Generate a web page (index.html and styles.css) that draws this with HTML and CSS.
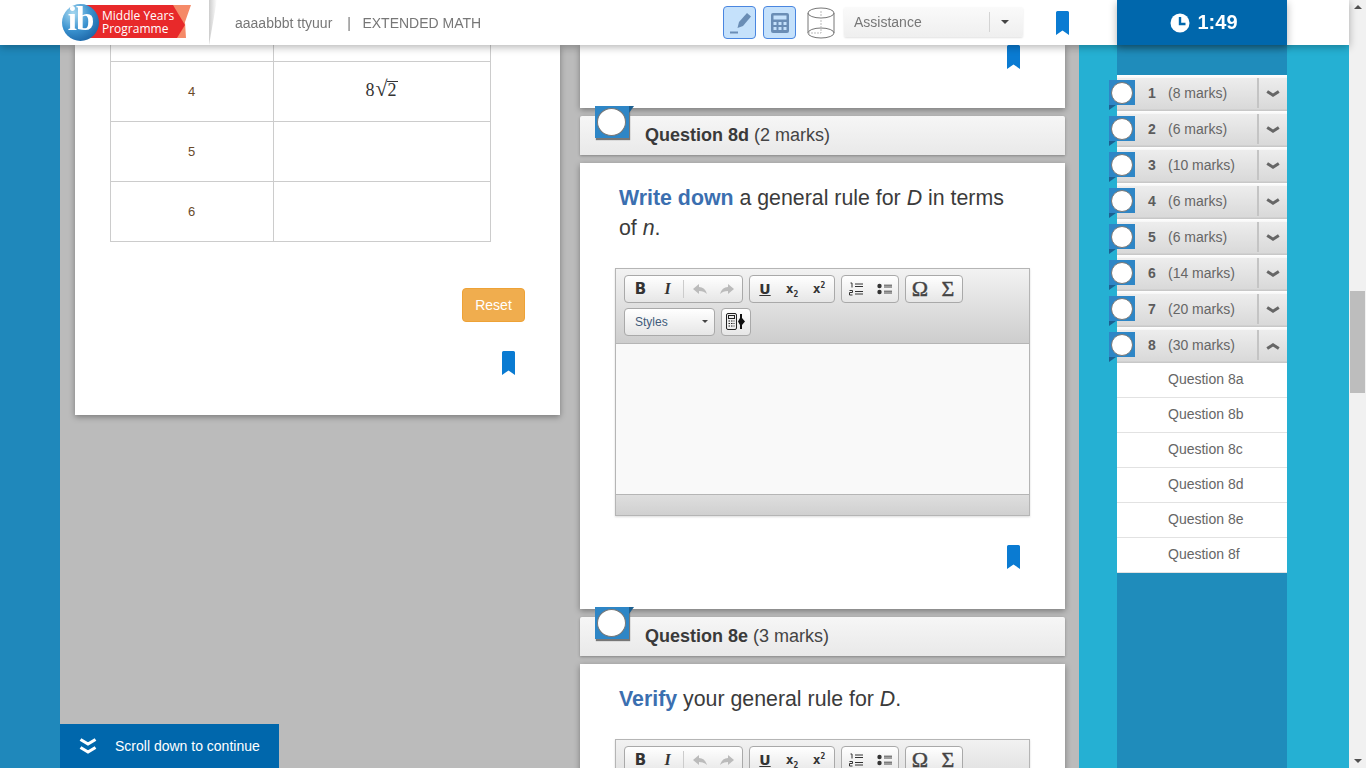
FILE: index.html
```html
<!DOCTYPE html>
<html lang="en">
<head>
<meta charset="utf-8">
<title>Extended Math</title>
<link rel="stylesheet" href="styles.css">
</head>
<body>
<svg class="defs" width="0" height="0" aria-hidden="true">
  <symbol id="bm" viewBox="0 0 13 24"><path d="M1.500 0H11.500Q13 0 13 1.500V24L6.500 19.500L0 24V1.500Q0 0 1.500 0Z" fill="#0a7bd2"/></symbol>
  <symbol id="chev" viewBox="0 0 14 8"><path d="M1.200 1.500L7 5.200L12.800 1.500" fill="none" stroke="#666" stroke-width="3"/></symbol>
</svg>
<header class="topbar">
  <div class="logo">
    <div class="logo-tail"></div>
    <div class="logo-banner"><span>Middle Years</span><span>Programme</span></div>
    <div class="logo-ball">ib</div>
  </div>
  <div class="logo-fold"></div>
  <div class="crumbs"><span>aaaabbbt ttyuur</span><span class="crumb-sep">|</span><span>EXTENDED MATH</span></div>
  <button class="tool tool-first" aria-label="Highlighter">
    <svg width="24" height="24" viewBox="0 0 24 24"><path d="M11 11L19 2L23 5.500L15 15L9.500 17Z" fill="#6a8db5"/><path d="M2 21.500H10" stroke="#6a8db5" stroke-width="2"/></svg>
  </button>
  <button class="tool" aria-label="Calculator">
    <svg width="20" height="22" viewBox="0 0 20 22"><rect x="1" y="1" width="18" height="20" rx="2" fill="#6a8db5"/><rect x="3.500" y="3.500" width="13" height="4" fill="#c5e1fb"/><g fill="#c5e1fb"><rect x="3.500" y="10" width="3" height="3"/><rect x="8.500" y="10" width="3" height="3"/><rect x="13.500" y="10" width="3" height="3"/><rect x="3.500" y="15" width="3" height="3"/><rect x="8.500" y="15" width="3" height="3"/><rect x="13.500" y="15" width="3" height="3"/></g></svg>
  </button>
  <svg class="cylinder" width="28" height="32" viewBox="0 0 28 32" fill="none" stroke="#777"><ellipse cx="14" cy="6" rx="13" ry="5"/><ellipse cx="14" cy="26" rx="13" ry="5"/><path d="M1 6V26M27 6V26"/><path d="M14 4V26M1 26H14" stroke="#bbb" stroke-dasharray="2 1"/></svg>
  <div class="assist"><span class="assist-label">Assistance</span><span class="assist-caret"></span></div>
  <svg class="top-bm" width="13" height="24"><use href="#bm"/></svg>
  <div class="timer">
    <svg width="20" height="20" viewBox="0 0 20 20"><circle cx="10" cy="10" r="9.500" fill="#fff"/><path d="M10 4V11H15.500" fill="none" stroke="#0067ac" stroke-width="2.400"/></svg>
    <span>1:49</span>
  </div>
</header>

<div class="page">
  <div class="gutter"></div>
  <main class="main">
    <section class="col">
      <div class="panel panel-left">
        <table class="grid">
          <tr class="cut"><td></td><td></td></tr>
          <tr><td>4</td><td class="math">8<span class="root">√</span><span class="radicand">2</span></td></tr>
          <tr><td>5</td><td></td></tr>
          <tr><td>6</td><td></td></tr>
        </table>
        <div class="reset-row"><button class="reset">Reset</button></div>
        <div class="bm-row"><svg width="13" height="24"><use href="#bm"/></svg></div>
      </div>
    </section>
    <section class="col">
      <div class="panel panel-cut">
        <div class="bm-row bm-top"><svg width="13" height="24"><use href="#bm"/></svg></div>
      </div>
      <div class="qhead"><span class="qflag"><i></i></span><b>Question 8d</b>&nbsp;(2 marks)</div>
      <div class="panel panel-q">
        <p class="prompt"><b>Write down</b> a general rule for <em>D</em> in terms of <em>n</em>.</p>
        <div class="editor">
          <div class="toolbar">
            <div class="tb-row">
              <div class="tb-group">
                <span class="tb tb-b">B</span><span class="tb tb-i">I</span><span class="tb-sep"></span>
                <span class="tb"><svg width="16" height="12" viewBox="0 0 16 12"><path d="M7 1L1 6L7 11V8Q12 8 15 11Q13 4 7 4Z" fill="#bbb"/></svg></span>
                <span class="tb"><svg width="16" height="12" viewBox="0 0 16 12"><path d="M9 1L15 6L9 11V8Q4 8 1 11Q3 4 9 4Z" fill="#bbb"/></svg></span>
              </div>
              <div class="tb-group tb-w86">
                <span class="tb tb-u">U</span><span class="tb tb-x">x<sub>2</sub></span><span class="tb tb-x">x<sup>2</sup></span>
              </div>
              <div class="tb-group tb-w58">
                <span class="tb"><svg width="14" height="14" viewBox="0 0 14 14"><path d="M6 2H14M6 4.500H14M6 9.500H14M6 12H14" stroke="#333"/><path d="M1.500 1H3V5.500M0.500 8.500H3.500V10.500H0.500V13H3.500" fill="none" stroke="#333"/></svg></span>
                <span class="tb"><svg width="15" height="12" viewBox="0 0 15 12"><circle cx="2.500" cy="3" r="2.200" fill="#333"/><circle cx="2.500" cy="9" r="2.200" fill="#333"/><path d="M7 2.200H15M7 4H15M7 8.200H15M7 10H15" stroke="#333" stroke-width=".9"/></svg></span>
              </div>
              <div class="tb-group tb-w58">
                <span class="tb tb-sym">Ω</span><span class="tb tb-sym">Σ</span>
              </div>
            </div>
            <div class="tb-row">
              <div class="tb-group tb-styles"><span>Styles</span><i class="caret"></i></div>
              <div class="tb-group tb-calc">
                <svg width="20" height="17" viewBox="0 0 20 17"><rect x="0.500" y="0.500" width="10" height="16" rx="1.500" fill="#eee" stroke="#222"/><rect x="2.500" y="2.500" width="6" height="3" fill="none" stroke="#222"/><path d="M2.500 8H8.500M2.500 10.500H8.500M2.500 13H8.500" stroke="#222" stroke-dasharray="1.500 1"/><path d="M14 1H16V5L19 8.500L16 12V16H14V12L12 8.500L14 5Z" fill="#111"/></svg>
              </div>
            </div>
          </div>
          <div class="ed-body"></div>
          <div class="ed-foot"></div>
        </div>
        <div class="bm-row bm-q"><svg width="13" height="24"><use href="#bm"/></svg></div>
      </div>
      <div class="qhead"><span class="qflag"><i></i></span><b>Question 8e</b>&nbsp;(3 marks)</div>
      <div class="panel panel-q">
        <p class="prompt"><b>Verify</b> your general rule for <em>D</em>.</p>
        <div class="editor">
          <div class="toolbar">
            <div class="tb-row">
              <div class="tb-group">
                <span class="tb tb-b">B</span><span class="tb tb-i">I</span><span class="tb-sep"></span>
                <span class="tb"><svg width="16" height="12" viewBox="0 0 16 12"><path d="M7 1L1 6L7 11V8Q12 8 15 11Q13 4 7 4Z" fill="#bbb"/></svg></span>
                <span class="tb"><svg width="16" height="12" viewBox="0 0 16 12"><path d="M9 1L15 6L9 11V8Q4 8 1 11Q3 4 9 4Z" fill="#bbb"/></svg></span>
              </div>
              <div class="tb-group tb-w86">
                <span class="tb tb-u">U</span><span class="tb tb-x">x<sub>2</sub></span><span class="tb tb-x">x<sup>2</sup></span>
              </div>
              <div class="tb-group tb-w58">
                <span class="tb"><svg width="14" height="14" viewBox="0 0 14 14"><path d="M6 2H14M6 4.500H14M6 9.500H14M6 12H14" stroke="#333"/><path d="M1.500 1H3V5.500M0.500 8.500H3.500V10.500H0.500V13H3.500" fill="none" stroke="#333"/></svg></span>
                <span class="tb"><svg width="15" height="12" viewBox="0 0 15 12"><circle cx="2.500" cy="3" r="2.200" fill="#333"/><circle cx="2.500" cy="9" r="2.200" fill="#333"/><path d="M7 2.200H15M7 4H15M7 8.200H15M7 10H15" stroke="#333" stroke-width=".9"/></svg></span>
              </div>
              <div class="tb-group tb-w58">
                <span class="tb tb-sym">Ω</span><span class="tb tb-sym">Σ</span>
              </div>
            </div>
          </div>
        </div>
      </div>
    </section>
  </main>
  <aside class="rail">
    <nav class="nav">
      <div class="nav-row"><span class="navflag"><i></i></span><b>1</b><span class="nav-marks">(8 marks)</span><span class="nav-toggle"><svg width="14" height="8"><use href="#chev"/></svg></span></div>
      <div class="nav-row"><span class="navflag"><i></i></span><b>2</b><span class="nav-marks">(6 marks)</span><span class="nav-toggle"><svg width="14" height="8"><use href="#chev"/></svg></span></div>
      <div class="nav-row"><span class="navflag"><i></i></span><b>3</b><span class="nav-marks">(10 marks)</span><span class="nav-toggle"><svg width="14" height="8"><use href="#chev"/></svg></span></div>
      <div class="nav-row"><span class="navflag"><i></i></span><b>4</b><span class="nav-marks">(6 marks)</span><span class="nav-toggle"><svg width="14" height="8"><use href="#chev"/></svg></span></div>
      <div class="nav-row"><span class="navflag"><i></i></span><b>5</b><span class="nav-marks">(6 marks)</span><span class="nav-toggle"><svg width="14" height="8"><use href="#chev"/></svg></span></div>
      <div class="nav-row"><span class="navflag"><i></i></span><b>6</b><span class="nav-marks">(14 marks)</span><span class="nav-toggle"><svg width="14" height="8"><use href="#chev"/></svg></span></div>
      <div class="nav-row"><span class="navflag"><i></i></span><b>7</b><span class="nav-marks">(20 marks)</span><span class="nav-toggle"><svg width="14" height="8"><use href="#chev"/></svg></span></div>
      <div class="nav-row"><span class="navflag"><i></i></span><b>8</b><span class="nav-marks">(30 marks)</span><span class="nav-toggle"><svg class="flip" width="14" height="8"><use href="#chev"/></svg></span></div>
      <ul class="sublist">
        <li>Question 8a</li>
        <li>Question 8b</li>
        <li>Question 8c</li>
        <li>Question 8d</li>
        <li>Question 8e</li>
        <li>Question 8f</li>
      </ul>
    </nav>
  </aside>
  <div class="scrollbar">
    <span class="sb-up"></span>
    <span class="sb-thumb"></span>
    <span class="sb-down"></span>
  </div>
</div>

<div class="scroll-hint">
  <svg width="18" height="17" viewBox="0 0 18 17" fill="none" stroke="#fff" stroke-width="3.200"><path d="M1.500 1.500L9 6L16.500 1.500"/><path d="M1.500 9.500L9 14L16.500 9.500"/></svg>
  <span>Scroll down to continue</span>
</div>
</body>
</html>
```
FILE: styles.css
```css
* { box-sizing: border-box; }
html, body { margin: 0; height: 768px; overflow: hidden; }
body { font-family: "Liberation Sans", Arial, sans-serif; color: #333; background: #bbb; }
.defs { display: block; height: 0; }

/* header */
.topbar {
  position: fixed; top: 0; left: 0; width: 1349px; height: 45px; z-index: 5;
  background: #fff; display: flex; align-items: center;
  box-shadow: 0 2px 8px rgba(0,0,0,.3);
}
.logo { position: relative; width: 130px; height: 45px; margin-left: 62px; flex: none; }
.logo-tail {
  position: absolute; left: 90px; top: 5px; width: 39px; height: 33px;
  background: #f58a68;
  clip-path: polygon(0 0, 100% 0, 33px 17px, 34px 100%, 0 100%);
}
.logo-banner {
  position: absolute; left: 24px; top: 5px; width: 100px; height: 33px;
  background: #e8292a;
  clip-path: polygon(0 0, 87px 0, 99px 20px, 91px 100%, 0 100%);
  color: #fff; font: 12px/13px "Open Sans", sans-serif;
  padding: 4px 0 0 16px; display: flex; flex-direction: column; white-space: nowrap;
}
.logo-ball {
  position: absolute; left: 0; top: 4px; width: 37px; height: 37px; border-radius: 50%;
  background: radial-gradient(circle at 30% 25%, #a6d8f0 0%, #3a92cf 45%, #0d4f92 100%);
  color: #fff; font: bold 33px/31px "Liberation Serif", serif; text-align: center; letter-spacing: -1px;
}
.logo-fold {
  width: 8px; height: 45px; flex: none; margin-left: 17px;
  background: linear-gradient(90deg, #ccc, #fff);
  clip-path: polygon(0 0, 100% 0, 0 100%);
}
.crumbs { width: 488px; margin-left: 18px; font-size: 14px; color: #777; flex: none; white-space: nowrap; }
.crumb-sep { margin: 0 11.500px 0 15px; }
.tool {
  width: 33px; height: 33px; margin-left: 7px; padding: 0; flex: none;
  background: #c5e1fb; border: 1px solid #4a86e0; border-radius: 4px;
  display: flex; align-items: center; justify-content: center;
}
.tool-first { margin-left: 0; }
.cylinder { margin-left: 11px; flex: none; }
.assist {
  width: 179px; height: 30px; margin: -1px 0 0 9px; flex: none; position: relative;
  display: flex; align-items: center; padding-left: 10px;
  font-size: 14px; color: #777;
  background: linear-gradient(#fafafa, #efefef); border-radius: 2px;
  box-shadow: 0 1px 2px rgba(0,0,0,.12);
}
.assist-label { width: 136px; border-right: 1px solid #d4d4d4; line-height: 20px; }
.assist-caret { margin-left: 11px; border: 4px solid transparent; border-top: 4px solid #444; border-bottom: 0; }
.top-bm { margin-left: 33px; flex: none; }
.timer {
  width: 170px; height: 45px; margin-left: 48px; padding-left: 4px; flex: none;
  background: #0067ac; color: #fff; font-size: 20px; font-weight: bold;
  display: flex; align-items: center; justify-content: center; gap: 7px;
  box-shadow: 0 3px 8px rgba(0,0,0,.3);
}

/* page */
.page { display: flex; height: 768px; }
.gutter { width: 60px; flex: none; background: #1f88bb; }
.main { width: 1019px; flex: none; display: flex; gap: 20px; padding: 45px 14px 0 15px; background: #bbb; }
.col { width: 485px; flex: none; display: flex; flex-direction: column; }
.panel { background: #fff; box-shadow: 0 2px 6px rgba(0,0,0,.35); flex: none; }

.panel-left { height: 370px; padding-left: 35px; }
.grid { width: 381px; border-collapse: collapse; table-layout: fixed; }
.grid td { height: 60px; border: 1px solid #ccc; text-align: center; font-size: 13px; color: #6a4a2a; padding: 0 1px 0 0; }
.grid td:first-child { width: 163px; }
.grid .cut td { height: 16px; border-top: 0; }
.grid .math { font: 18px "Liberation Serif", serif; color: #333; padding-bottom: 2px; }
.root { font-size: 22px; line-height: 18px; margin: 0 -1px 0 1px; }
.radicand { border-top: 1px solid #333; line-height: 16px; display: inline-block; padding: 0 1px; }
.reset-row { display: flex; justify-content: flex-end; padding: 46px 35px 0 0; }
.reset {
  width: 63px; height: 34px; background: #f0ad4e; border: 1px solid #eea236; border-radius: 4px;
  color: #fff; font: 14px "Liberation Sans", Arial, sans-serif; padding: 0;
}
.bm-row { display: flex; justify-content: flex-end; padding: 29px 45px 0 0; }
.bm-row svg { display: block; }
.bm-top { padding-top: 0; }

.panel-cut { height: 63px; }
.qhead {
  position: relative; height: 39px; margin: 8px 0; flex: none;
  padding-left: 65px; line-height: 38px; font-size: 18px; color: #444;
  background: linear-gradient(#f6f6f6, #e9e9e9);
  border-radius: 2px 2px 0 0;
  box-shadow: 0 1px 3px rgba(0,0,0,.3);
  display: flex;
}
.qhead b { color: #3a3a3a; }
.qflag {
  position: absolute; left: 15px; top: -10px; width: 34px; height: 32px;
  background: #2e86c6; box-shadow: 1px 2px 1px #777;
  padding: 2px 0 0 2px;
}
.qflag::after {
  content: ""; position: absolute; right: -5px; top: 0;
  border-left: 5px solid #1c5f90; border-bottom: 7px solid transparent;
}
.qflag i { display: block; width: 29px; height: 28px; border-radius: 50%; background: #fff; border: 1px solid #777; }

.panel-q { padding: 20px 35px 0; height: 446px; }
.prompt { margin: 0; padding: 0 10px 0 4px; font-size: 21.330px; line-height: 30px; color: #3b3b3b; }
.prompt b { color: #3b6fb0; }
.editor { width: 415px; margin-top: 25px; border: 1px solid #b5b5b5; box-shadow: 0 1px 2px rgba(0,0,0,.15); background: #f9f9f9; }
.toolbar { height: 75px; padding: 5.500px 8px 0; background: linear-gradient(#f2f2f2, #cdcdcd); border-bottom: 1px solid #b5b5b5; }
.tb-row { display: flex; gap: 6px; height: 28px; margin-bottom: 5px; }
.tb-group {
  display: flex; align-items: center; padding: 0 2px; height: 28px;
  border: 1px solid #a9a9a9; border-radius: 4px;
  background: linear-gradient(#fff, #e6e6e6);
  color: #333;
}
.tb-w86 { width: 86px; padding: 0; justify-content: center; }
.tb-w58 { width: 58px; padding: 0; justify-content: center; }
.tb-w58 .tb { width: 28px; }
.tb { width: 27px; text-align: center; font-size: 15px; display: flex; align-items: center; justify-content: center; }
.tb-b { font: bold 15px "DejaVu Sans", sans-serif; }
.tb-i { font: italic bold 16px "Liberation Serif", serif; }
.tb-sep { width: 1px; height: 18px; background: #ccc; margin: 0 2px; }
.tb-u { font: bold 14px "DejaVu Sans", sans-serif; text-decoration: underline; }
.tb-x { display: block; font: bold 13px/26px "DejaVu Sans Mono", monospace; }
.tb-x sub, .tb-x sup { font-size: 8px; line-height: 0; }
.tb-sym { font: 22px/26px "Liberation Serif", serif; color: #444; -webkit-text-stroke: .4px #444; }
.tb-styles { width: 91px; padding: 0 6px 0 10px; justify-content: space-between; font-size: 12px; color: #3f5a7a; }
.caret { border: 3px solid transparent; border-top: 3px solid #444; border-bottom: 0; }
.tb-calc { width: 30px; justify-content: center; padding: 0; }
.ed-body { height: 150px; }
.ed-foot { height: 21px; background: linear-gradient(#dedede, #d0d0d0); border-top: 1px solid #b5b5b5; }
.bm-q { padding: 29px 10px 0 0; }

/* right rail */
.rail { width: 270px; flex: none; background: #25b0d3; padding: 0 38px 0; }
.nav { width: 170px; height: 768px; background: #1f8cbb; padding-top: 75px; }
.nav-row {
  position: relative; height: 36px; padding: 0 0 0 31px; display: flex; align-items: center;
  font-size: 14px; color: #666;
  background: linear-gradient(#fff 0, #f6f6f6 3px, #ededed 3px, #d9d9d9 34px, #c8c8c8 35px, #c8c8c8 36px);
}
.nav-row b { width: 20px; font-size: 14px; color: #5c5c5c; }
.nav-marks { width: 89px; white-space: nowrap; }
.nav-toggle { height: 30px; width: 30px; padding-top: 2px; border-left: 2px solid #c4c4c4; display: flex; align-items: center; justify-content: center; }
.flip { transform: scaleY(-1); }
.navflag {
  position: absolute; left: -8px; top: 5px; width: 26px; height: 25px; background: #2e86c6;
  display: flex; align-items: center;
}
.navflag::after {
  content: ""; position: absolute; left: 0; bottom: -5px;
  border-top: 5px solid #1c5f90; border-right: 7px solid transparent;
}
.navflag i { width: 22px; height: 22px; border-radius: 50%; background: #fff; border: 1px solid #777; margin-left: 2px; flex: none; }
.sublist { margin: 0; padding: 0; list-style: none; background: #fff; }
.sublist li { height: 35px; line-height: 32px; padding-left: 51px; font-size: 14px; color: #666; border-bottom: 1px solid #e2e2e2; }

/* scrollbar */
.scrollbar { width: 17px; flex: none; background: #f1f1f1; display: flex; flex-direction: column; align-items: center; position: relative; }
.sb-thumb { width: 15px; height: 102px; background: #bdbdbd; margin-top: 291px; }
.sb-up, .sb-down { position: absolute; border: 4px solid transparent; }
.sb-up { top: 5px; border-bottom: 4px solid #505050; border-top: 0; }
.sb-down { bottom: 5px; border-top: 4px solid #505050; border-bottom: 0; }

/* overlay */
.scroll-hint {
  position: fixed; left: 60px; bottom: 0; width: 219px; height: 44px; z-index: 4;
  background: #0067ac; color: #fff; font-size: 14px;
  display: flex; align-items: center; gap: 18px; padding-left: 19px;
}
```
